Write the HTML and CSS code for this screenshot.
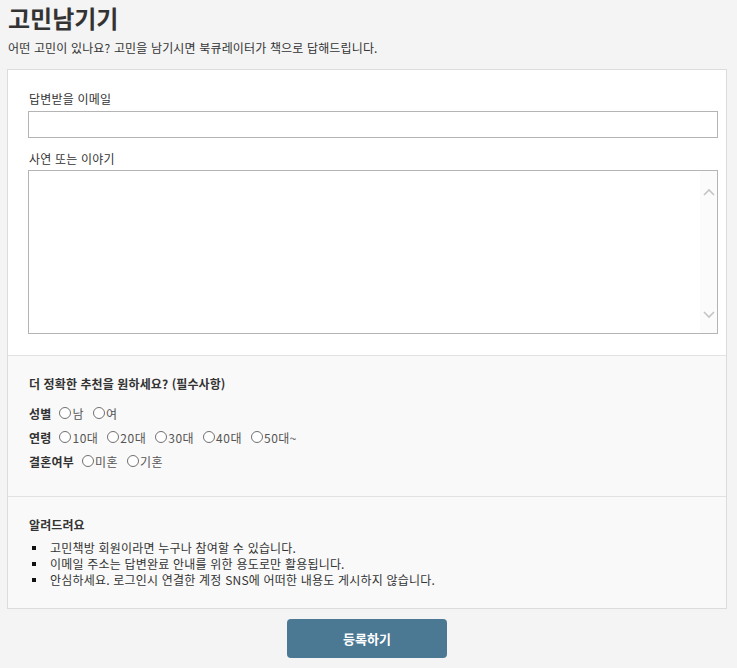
FILE: index.html
```html
<!DOCTYPE html>
<html lang="ko">
<head>
<meta charset="utf-8">
<title>고민남기기</title>
<link rel="stylesheet" href="styles.css">
</head>
<body>
<div class="page">
  <h1 class="title">고민남기기</h1>
  <p class="subtitle">어떤 고민이 있나요? 고민을 남기시면 북큐레이터가 책으로 답해드립니다.</p>
  <form class="box">
    <div class="section section-main">
      <label class="field-label" for="email">답변받을 이메일</label>
      <input class="text-input" id="email" type="text">
      <label class="field-label field-label-2" for="story">사연 또는 이야기</label>
      <div class="textarea-wrap">
        <textarea class="story" id="story"></textarea>
        <div class="fake-scroll">
          <svg class="chev" width="12" height="8" viewBox="0 0 12 8"><path d="M1 7 L6 2 L11 7" fill="none" stroke="#c4c4c4" stroke-width="1.6"/></svg>
          <svg class="chev" width="12" height="8" viewBox="0 0 12 8"><path d="M1 1 L6 6 L11 1" fill="none" stroke="#c4c4c4" stroke-width="1.6"/></svg>
        </div>
      </div>
    </div>
    <div class="section section-gray">
      <p class="sec-head">더 정확한 추천을 원하세요? (필수사항)</p>
      <div class="opt-row">
        <span class="opt-name">성별</span>
        <label class="opt"><input type="radio" name="sex">남</label>
        <label class="opt"><input type="radio" name="sex">여</label>
      </div>
      <div class="opt-row">
        <span class="opt-name">연령</span>
        <label class="opt"><input type="radio" name="age">10대</label>
        <label class="opt"><input type="radio" name="age">20대</label>
        <label class="opt"><input type="radio" name="age">30대</label>
        <label class="opt"><input type="radio" name="age">40대</label>
        <label class="opt"><input type="radio" name="age">50대~</label>
      </div>
      <div class="opt-row">
        <span class="opt-name">결혼여부</span>
        <label class="opt"><input type="radio" name="mar">미혼</label>
        <label class="opt"><input type="radio" name="mar">기혼</label>
      </div>
    </div>
    <div class="section section-gray section-notice">
      <p class="sec-head">알려드려요</p>
      <ul class="notice">
        <li>고민책방 회원이라면 누구나 참여할 수 있습니다.</li>
        <li>이메일 주소는 답변완료 안내를 위한 용도로만 활용됩니다.</li>
        <li>안심하세요. 로그인시 연결한 계정 SNS에 어떠한 내용도 게시하지 않습니다.</li>
      </ul>
    </div>
  </form>
  <div class="actions">
    <button class="submit" type="button">등록하기</button>
  </div>
</div>
</body>
</html>
```

FILE: styles.css
```css
* { box-sizing: border-box; }
html, body {
  margin: 0;
  padding: 0;
  background: #f4f4f4;
}
body {
  font-family: "Noto Sans CJK KR", "Noto Sans", sans-serif;
  color: #222;
  font-size: 12px;
}
.page {
  width: 737px;
  padding: 0 10px 0 7px;
}
.title {
  margin: 0;
  padding: 2px 0 0 1px;
  font-size: 24px;
  line-height: 32px;
  font-weight: 700;
  color: #333;
  letter-spacing: 0;
}
.subtitle {
  margin: 6px 0 0 0;
  padding-left: 1px;
  font-size: 12px;
  line-height: 16px;
  color: #333;
  letter-spacing: 0.15px;
}
.box {
  margin: 13px 0 0 0;
  width: 720px;
  border: 1px solid #dcdcdc;
  background: #fff;
}
.section {
  padding: 21px 8px 21px 20px;
}
.section-main {
  display: flex;
  flex-direction: column;
}
.field-label {
  font-size: 12px;
  line-height: 16px;
  color: #333;
  letter-spacing: 0.2px;
  margin-left: 1px;
}
.field-label-2 { margin-top: 13px; }
.text-input {
  margin: 4px 0 0 0;
  width: 690px;
  height: 27px;
  border: 1px solid #b4b4b4;
  background: #fff;
  outline: none;
  padding: 0 4px;
}
.textarea-wrap {
  position: relative;
  margin-top: 3px;
  width: 690px;
  height: 164px;
}
.story {
  display: block;
  width: 690px;
  height: 164px;
  border: 1px solid #b4b4b4;
  resize: none;
  overflow: hidden;
  outline: none;
  margin: 0;
}
.fake-scroll {
  position: absolute;
  top: 1px;
  right: 1px;
  bottom: 1px;
  width: 17px;
  background: #fbfbfb;
  display: flex;
  flex-direction: column;
  justify-content: space-between;
  align-items: center;
  padding: 17px 0 14px 0;
}
.section-gray {
  background: #f9f9f9;
  border-top: 1px solid #e2e2e2;
  padding: 20px 8px 23px 20px;
}
.section-notice {
  padding: 20px 8px 20px 20px;
}
.sec-head {
  margin: 0 0 9px 1px;
  font-weight: 700;
  font-size: 12px;
  line-height: 16px;
  color: #333;
  letter-spacing: 0.1px;
}
.opt-row {
  display: flex;
  align-items: center;
  height: 24px;
  gap: 9px;
  margin-left: 1px;
  color: #444;
}
.opt-name {
  font-weight: 700;
  color: #333;
  margin-right: -1px;
  letter-spacing: 0.2px;
}
.opt {
  display: flex;
  align-items: center;
  gap: 1px;
  color: #555;
  letter-spacing: 0.5px;
}
.opt input {
  appearance: none;
  -webkit-appearance: none;
  margin: 0;
  width: 12px;
  height: 12px;
  border: 1px solid #707070;
  border-radius: 50%;
  background: #fff;
}
.section-notice .sec-head { margin-bottom: 7px; }
.notice {
  margin: 0;
  padding: 0;
  list-style: none;
}
.notice li {
  position: relative;
  padding-left: 22px;
  line-height: 16px;
  color: #333;
  letter-spacing: 0.2px;
}
.notice li::before {
  content: "";
  position: absolute;
  left: 4px;
  top: 6px;
  width: 4px;
  height: 4px;
  background: #111;
}
.actions {
  width: 720px;
  display: flex;
  justify-content: center;
  padding-top: 10px;
}
.submit {
  width: 160px;
  height: 39px;
  border: none;
  border-radius: 4px;
  background: #4b7893;
  color: #fff;
  font-family: "Noto Sans CJK KR", "Noto Sans", sans-serif;
  font-weight: 700;
  font-size: 13px;
}
```
